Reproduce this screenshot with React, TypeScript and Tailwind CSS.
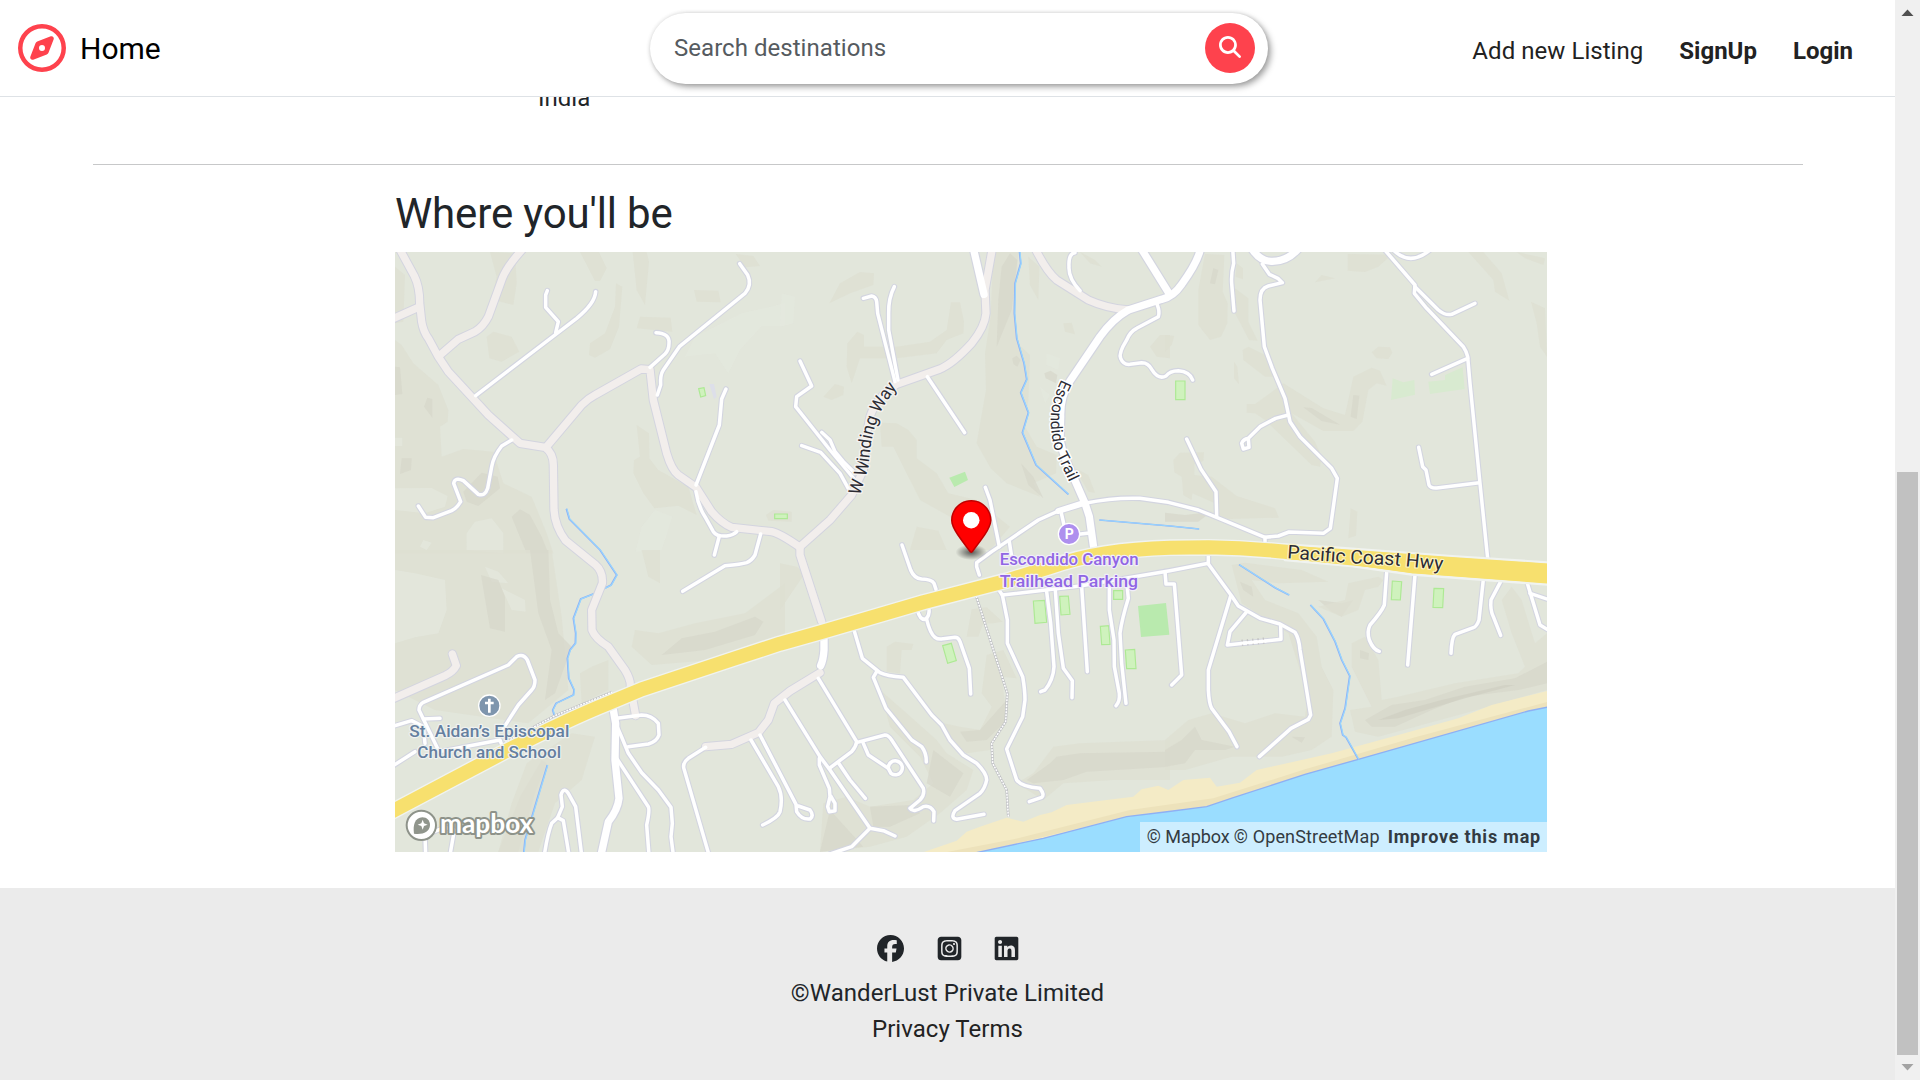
import { FaFacebook, FaLinkedin, FaMagnifyingGlass, FaRegCompass, FaSquareInstagram } from "react-icons/fa6";

type Point = [number, number];
type Shape = { at: Point; d: string };
type Road = Shape & { kind: "lane" | "street" | "avenue" | "collector" };

// The map is drawn at three units per pixel; every sheet has its own origin.
const NW: Point = [0, 0];
const N: Point = [1155, 0];
const NE: Point = [2310, 0];
const SW: Point = [0, 900];
const S: Point = [1155, 900];
const SE: Point = [2310, 900];

const terrain: (Shape & { tone: "soft" | "mid" | "deep" | "light" })[] = [
  // north-west
  { at: NW, tone: "soft", d: "M0 270L20 285L55 340L130 405L160 480L158 515L135 530L140 620L205 597L295 605L325 700L410 740L455 850L475 910L0 910Z" },
  { at: NW, tone: "mid", d: "M0 350L15 352L22 432L0 435ZM87 470L97 443L112 447L112 503ZM20 625L50 625L48 660L15 672Z" },
  { at: NW, tone: "mid", d: "M205 725L260 668L308 680L315 715L250 768L215 755ZM350 800L375 778L405 795L440 860L460 910L395 910Z" },
  { at: NW, tone: "light", d: "M0 715L110 714L158 738L150 770L90 790L0 780ZM215 850L240 815L290 805L325 850L325 910L215 900ZM0 563L22 563L22 588L0 588ZM85 870L110 878L95 900L75 890Z" },
  { at: NW, tone: "soft", d: "M285 6L360 10L365 100L355 165L290 148L305 80ZM275 260L295 245L350 260L373 305L320 335L283 325Z" },
  { at: NW, tone: "soft", d: "M555 6L612 6L635 55L615 93L600 93ZM663 100L682 110L672 230L645 298L600 323L582 315L585 280L630 250L660 170Z" },
  { at: NW, tone: "soft", d: "M713 6L755 6L762 35L750 165L725 120ZM735 200L827 203L832 245L725 235ZM897 120L970 122L977 157L905 155ZM1022 12L1075 18L1095 48L1050 52Z" },
  { at: NW, tone: "soft", d: "M725 525L762 550L763 625L790 660L880 710L905 795L850 767L778 775L745 730L715 670L717 630L735 620Z" },
  { at: NW, tone: "light", d: "M740 830L780 780L832 800L800 900L722 905ZM1000 370L1035 300L1100 228L1170 228L1170 160L1040 190L900 260L870 320L960 310Z" },
  { at: NW, tone: "soft", d: "M0 50L30 75L25 215L0 220ZM1113 795L1135 780L1190 785L1190 815L1120 812Z" },
  // north
  { at: N, tone: "soft", d: "M148 160L180 100L240 66L282 70L280 105L210 130ZM202 280L232 245L252 255L252 290L350 290L450 275L500 240L513 157L540 157L552 215L550 250L500 270L470 310L350 325L240 325L215 400L200 350ZM130 440L165 402L192 410L190 435L155 450Z" },
  { at: N, tone: "soft", d: "M640 6L715 6L703 200L712 280L750 315L745 450L735 530L770 590L830 615L828 670L760 700L780 740L680 700L632 655L590 580L618 420L615 310L632 200Z" },
  { at: N, tone: "mid", d: "M665 50L690 10L712 30L695 180L650 290L655 150ZM697 325L710 317L722 330L712 350L700 342ZM723 640L760 680L790 745L745 705ZM793 370L812 362L832 375L828 400L797 385Z" },
  { at: N, tone: "soft", d: "M300 518L350 520L385 540L410 570L410 625L470 670L505 730L590 750L690 830L630 900L560 900L510 800L420 750L370 650L340 590L305 590ZM885 655L925 675L945 728L925 725Z" },
  { at: N, tone: "soft", d: "M900 6L945 30L965 50L930 40ZM1110 290L1140 255L1170 255L1170 325L1130 320ZM745 20L778 50L775 150L750 105ZM850 220L875 218L885 253L855 245ZM410 830L475 842L500 900L390 900Z" },
  { at: N, tone: "light", d: "M5 130L45 140L40 220L0 230ZM800 310L840 325L835 360L800 345ZM780 410L810 435L795 460Z" },
  // north-east
  { at: NE, tone: "soft", d: "M120 12L178 15L173 125L188 160L187 220L168 260L135 270L100 225L100 120ZM215 40L234 55L234 88L212 80ZM210 115L250 145L250 215L278 272L252 270L210 190ZM233 300L250 290L310 320L325 380L300 380L235 330Z" },
  { at: NE, tone: "soft", d: "M245 462L270 462L315 430L355 400L475 475L540 495L550 450L565 380L620 353L645 362L665 407L635 400L610 420L592 515L565 543L475 543L380 490L450 575L470 620L465 650L440 645L300 510L270 490L245 488Z" },
  { at: NE, tone: "mid", d: "M415 472L440 474L525 524L470 513ZM565 435L583 437L575 507L557 500ZM145 55L160 60L150 103L135 100Z" },
  { at: NE, tone: "soft", d: "M620 307L640 290L675 292L682 308L670 327L635 325ZM548 12L680 14L640 50L600 66L548 62ZM910 6L955 6L1010 70L1033 152L990 125L985 90ZM1055 6L1140 25L1135 45L1080 25ZM1098 155L1140 175L1146 320L1125 290L1115 220ZM450 97L470 75L510 85Z" },
  { at: NE, tone: "soft", d: "M25 630L45 608L117 607L115 633L88 642L88 675L140 680L215 738L330 775L342 803L165 808L150 760L82 730L80 750L55 735L50 680L28 667ZM557 775L577 785L573 857L550 865ZM0 255L28 258L20 285L0 305ZM207 335L217 350L222 403L207 385Z" },
  { at: NE, tone: "mid", d: "M0 788L60 795L140 785L100 815L0 815Z" },
  // south-west
  { at: SW, tone: "soft", d: "M0 0L470 0L500 200L520 420L400 520L120 480L0 420Z" },
  { at: SW, tone: "light", d: "M0 60L60 70L150 90L155 180L130 250L60 262L0 280ZM320 115L390 150L392 185L350 180ZM270 50L310 65L340 100L290 95Z" },
  { at: SW, tone: "mid", d: "M405 0L460 0L465 150L490 250L530 290L480 430L450 450L470 300L430 190ZM258 75L310 90L330 140L330 245L285 235ZM375 740L440 630L455 640L420 730L370 905L310 905Z" },
  { at: SW, tone: "soft", d: "M395 640L530 550L600 560L560 690L480 760L430 905L310 905L350 760ZM555 370L590 350L640 330L640 420L560 460ZM720 240L790 250L900 220L1050 190L1170 100L1170 250L950 330L770 345L710 290ZM740 0L795 0L795 100L760 80Z" },
  { at: SW, tone: "mid", d: "M800 315L860 265L960 245L1080 200L1105 215L1080 255L930 300Z" },
  // south
  { at: S, tone: "soft", d: "M0 40L50 50L75 70L0 180ZM575 178L620 172L668 215L640 220L610 220L595 260L560 260ZM320 290L345 275L400 282L395 300L365 300L360 370L320 365ZM620 315L670 300L710 385L665 380L680 500L630 600L560 610L500 570L490 520L540 530L600 540L635 470L605 430Z" },
  { at: S, tone: "soft", d: "M300 420L380 490L470 570L500 610L580 660L560 720L480 790L380 860L270 890L120 905L130 760L200 740L270 770L400 750L460 700L420 620L330 530ZM710 700L760 670L820 590L900 580L1170 570L1170 690L1000 690L850 700L790 750Z" },
  { at: S, tone: "mid", d: "M740 690L810 640L830 620L900 610L1170 605L1170 650L920 665L850 690L760 700ZM460 600L550 670L510 740L440 700ZM270 770L400 765L420 790L330 830L280 830ZM540 545L600 540L680 450L680 510L620 570L560 575ZM150 780L250 890L120 905Z" },
  // south-east
  { at: SE, tone: "soft", d: "M200 45L240 38L410 60L490 95L340 100L260 90L300 150L400 190L455 260L470 350L505 420L500 560L440 600L350 620L200 620L60 660L0 660L0 570L70 510L140 490L240 520L330 490L420 500L430 440L370 250L230 160Z" },
  { at: SE, tone: "mid", d: "M0 600L50 570L90 530L110 570L210 590L180 600L90 600L60 640L0 650ZM380 560L420 562L410 578ZM225 95L260 110L265 140L235 120ZM460 150L530 160L565 150L530 200L500 185Z" },
  { at: SE, tone: "soft", d: "M550 100L640 80L655 90L640 110L600 120L580 180L530 200L460 170L540 150ZM560 280L600 260L640 330L650 450L700 440L870 400L1060 370L1080 350L1040 250L1010 150L1040 110L1070 150L1110 280L1146 250L1146 420L900 490L640 560L570 545L555 480L620 470L560 350Z" },
  { at: SE, tone: "mid", d: "M600 510L680 465L780 450L900 410L1050 385L1146 335L1146 400L1060 420L900 440L800 480L690 530L620 530ZM585 300L612 310L610 330L585 325Z" },
  { at: SE, tone: "deep", d: "M640 510L720 480L830 450L1020 405L1050 405L900 445L700 505Z" },
];

const roads: Road[] = [
  // main local roads
  { at: NW, kind: "collector", d: "M10 -10L58 78Q74 110 74 160L80 215Q85 245 100 265L130 320L160 365L280 495L375 580L450 592Q475 610 475 645L477 780Q480 830 512 872L600 943Q625 965 622 1000L590 1080L591 1140Q600 1165 640 1190L690 1260Q708 1290 706 1310L722 1397" },
  { at: NW, kind: "collector", d: "M-15 210L70 172" },
  { at: NW, kind: "collector", d: "M385 -5Q335 50 322 85L280 200Q265 230 240 245L190 268L132 318" },
  { at: NW, kind: "collector", d: "M453 592L560 465Q580 445 600 435L738 357L765 359L775 450L815 610Q830 660 850 675L903 712L950 785Q980 820 1010 832L1130 845Q1155 850 1215 892" },
  { at: N, kind: "collector", d: "M60 890L150 810L215 735L250 660L258 560L270 500Q290 440 350 403L480 357Q520 340 575 280Q615 230 618 190L615 120L637 -5" },
  { at: N, kind: "collector", d: "M60 890L60 915L125 1115" },
  { at: N, kind: "collector", d: "M765 -5Q800 65 830 90L925 150Q980 175 1045 180" },
  { at: SW, kind: "collector", d: "M172 312L184 347Q175 365 150 377L-15 450" },
  { at: SW, kind: "collector", d: "M932 590L1010 583L1090 548L1120 510L1138 460L1185 423L1275 368" },

  { at: N, kind: "lane", d: "M598 975L590 950L590 938L635 905L690 868L775 810L835 783L915 760Q1000 742 1080 745L1165 757L1255 780L1310 802L1455 862L1455 882" },
  { at: N, kind: "street", d: "M835 783L915 758" },
  { at: N, kind: "avenue", d: "M580 -5L612 133" },
  { at: N, kind: "avenue", d: "M1080 -10L1170 135" },
  { at: N, kind: "avenue", d: "M1262 -10Q1258 30 1205 103Q1180 140 1145 148L1045 180Q1000 205 960 260L870 393Q840 440 842 500L840 570Q850 620 880 680L915 760L928 800L942 900" },
  { at: NE, kind: "avenue", d: "M260 -5Q285 35 320 34Q370 35 405 -10" },
  { at: SW, kind: "avenue", d: "M655 480L662 520L660 630L672 745Q668 780 640 815L618 915" },
  { at: S, kind: "avenue", d: "M132 255L132 300Q130 330 122 347" },

  // north-west lanes
  { at: NW, kind: "lane", d: "M242 437L545 205Q600 160 602 125" },
  { at: NW, kind: "lane", d: "M457 122L452 135L452 172L490 215L482 248" },
  { at: NW, kind: "lane", d: "M1034 41L1058 75Q1072 105 1050 130L853 290L805 360Q795 375 797 405L787 435" },
  { at: NW, kind: "lane", d: "M783 248Q825 250 822 280Q822 300 810 312L765 352" },
  { at: NW, kind: "lane", d: "M993 417L980 447L973 525L903 705" },
  { at: NW, kind: "lane", d: "M903 725Q910 770 930 800L955 845Q965 860 995 858Q1015 855 1025 845" },
  { at: NW, kind: "lane", d: "M973 858L958 915" },
  { at: NW, kind: "lane", d: "M1097 852L1080 915Q1070 932 1055 938Q1040 943 990 947L863 1024" },
  { at: NW, kind: "lane", d: "M350 570L320 588Q295 620 290 650L278 715Q270 740 250 733L205 692Q180 680 176 700L197 755Q185 775 170 782L115 803L92 802L70 768" },

  // north lanes
  { at: N, kind: "lane", d: "M250 145L275 138Q288 140 290 155L293 190L345 395" },
  { at: N, kind: "lane", d: "M343 110Q325 145 326 190L326 240L354 390" },
  { at: N, kind: "lane", d: "M60 333L95 408L50 440L47 470L150 600L225 690" },
  { at: N, kind: "lane", d: "M125 547L150 570L165 605L190 635L225 670" },
  { at: N, kind: "lane", d: "M65 587L122 607L180 670L210 725" },
  { at: N, kind: "lane", d: "M442 380L554 548" },
  { at: N, kind: "lane", d: "M616 712L630 750L658 890" },
  { at: N, kind: "lane", d: "M688 875L695 920" },
  { at: N, kind: "lane", d: "M843 785L852 825" },
  { at: N, kind: "lane", d: "M895 853L935 848" },
  { at: N, kind: "lane", d: "M366 885L392 960Q402 985 425 987Q455 988 462 1000L468 1018" },
  { at: N, kind: "lane", d: "M885 8Q865 10 867 50Q865 85 900 122" },
  { at: N, kind: "lane", d: "M1132 165Q1140 185 1135 200L1070 235Q1050 245 1040 270Q1015 310 1022 325Q1030 345 1050 343L1085 338Q1105 338 1115 358Q1135 390 1158 378Q1170 362 1195 362Q1230 365 1238 390" },

  // north-east lanes
  { at: NE, kind: "lane", d: "M203 -5L206 40Q198 70 200 100L207 183" },
  { at: NE, kind: "lane", d: "M292 42L313 73L340 86L352 98L310 108Q285 115 285 150L298 290L322 355L360 445L375 515L405 560L500 655L517 685L496 835L475 850L372 846L340 858L300 862" },
  { at: NE, kind: "lane", d: "M370 495L332 505L285 530L250 565L252 592L235 597L230 580Q235 568 250 565" },
  { at: NE, kind: "lane", d: "M65 567L108 658L153 725L155 798" },
  { at: NE, kind: "lane", d: "M655 -5L750 105L748 130L785 175L895 290Q905 305 908 320L915 400L945 700L968 925" },
  { at: NE, kind: "lane", d: "M750 110L820 180Q840 197 860 193L930 160" },
  { at: NE, kind: "lane", d: "M908 325L800 373" },
  { at: NE, kind: "lane", d: "M761 592L773 650L783 660L792 705Q797 715 815 714L943 698" },
  { at: NE, kind: "lane", d: "M685 0Q735 50 795 0" },

  // south-west lanes
  { at: SW, kind: "lane", d: "M135 505L85 507M-10 530L50 512L85 530L90 580" },
  { at: SW, kind: "lane", d: "M130 600L72 480Q72 465 85 457L340 345L365 320Q385 310 397 330L420 390Q420 410 410 420L370 465L325 535" },
  { at: SW, kind: "lane", d: "M-10 650L60 605M130 605L315 570L322 590" },
  { at: SW, kind: "lane", d: "M665 505L740 495Q770 495 790 520L792 555Q785 575 760 582L700 590" },
  { at: SW, kind: "lane", d: "M662 520Q680 560 700 610L740 668L790 720L828 772L832 820L828 860L835 915" },
  { at: SW, kind: "lane", d: "M665 625L760 770Q765 780 755 825L762 915" },
  { at: SW, kind: "lane", d: "M448 915Q458 850 470 820L488 803L505 812L522 915" },
  { at: SW, kind: "lane", d: "M488 803L502 770L498 735Q505 710 520 730L542 770L560 915" },
  { at: SW, kind: "lane", d: "M90 855L92 915M165 915L178 840L150 832L110 848" },
  { at: SW, kind: "lane", d: "M932 592L880 625Q860 640 868 660L942 915" },
  { at: SW, kind: "lane", d: "M1068 570L1150 710Q1165 740 1155 785Q1150 802 1103 825" },
  { at: SW, kind: "lane", d: "M1095 555L1203 763L1205 785Q1220 810 1245 807Q1258 797 1245 780L1210 768" },

  // south lanes
  { at: S, kind: "lane", d: "M15 450L120 620L150 660L270 835L310 842L345 858" },
  { at: S, kind: "lane", d: "M270 835L215 890L150 912" },
  { at: S, kind: "lane", d: "M115 385L230 575Q228 590 215 605L148 655" },
  { at: S, kind: "lane", d: "M232 577L315 555Q325 555 335 570L430 715Q435 735 420 750L390 775Q400 790 430 770Q450 765 462 785L461 813" },
  { at: S, kind: "lane", d: "M250 580L265 615L325 655" },
  { at: S, kind: "lane", d: "M325 655A21 21 0 1 1 333 670Z" },
  { at: S, kind: "lane", d: "M175 638L210 690L256 745" },
  { at: S, kind: "lane", d: "M118 625L118 645L148 715L150 740L143 770L148 785L165 782L165 760L152 738" },
  { at: S, kind: "lane", d: "M222 240L247 325L300 368Q320 378 370 382L455 495L485 525L510 570L550 615L590 640Q620 670 620 690Q615 715 600 730L525 782Q510 805 530 808L612 793" },
  { at: S, kind: "lane", d: "M290 365L280 382L318 475L395 570L425 590Q440 610 439 636" },
  { at: S, kind: "lane", d: "M412 180Q420 210 435 208Q450 200 447 172" },
  { at: S, kind: "lane", d: "M440 208Q450 250 465 262Q475 270 490 266L525 262Q535 262 540 275L568 355L572 432" },
  { at: S, kind: "lane", d: "M650 110L667 135L682 210L682 280L728 380Q735 420 735 450L728 500L680 597L710 690Q725 710 780 715Q795 735 785 742L748 755" },
  { at: S, kind: "lane", d: "M667 135L900 108L1170 62L1285 40" },
  { at: S, kind: "lane", d: "M800 125L812 220L822 350Q820 390 795 420L782 425" },
  { at: S, kind: "lane", d: "M826 120L835 250L850 355L877 392L876 443" },
  { at: S, kind: "lane", d: "M905 110L922 365" },
  { at: S, kind: "lane", d: "M988 105L988 180L1002 270L1003 350L1018 430Q1020 455 1008 467" },
  { at: S, kind: "lane", d: "M1040 95L1045 145Q1025 210 1020 250L1025 340L1038 460" },

  // south-east lanes
  { at: SE, kind: "lane", d: "M0 65L3 102L28 102L50 375L20 405" },
  { at: SE, kind: "lane", d: "M130 10L130 42L200 138L220 168L285 205L345 222L390 247Q402 265 405 300L437 495L430 508L378 535L283 620" },
  { at: SE, kind: "lane", d: "M197 138L130 360L130 420Q132 460 140 475L192 545L216 590" },
  { at: SE, kind: "lane", d: "M243 188L195 245L187 285L348 268L347 228" },
  { at: SE, kind: "lane", d: "M665 68L658 165Q650 185 615 225Q605 245 613 270Q625 300 643 304" },
  { at: SE, kind: "lane", d: "M750 75L728 345" },
  { at: SE, kind: "lane", d: "M955 88L942 210Q935 230 925 233L870 253Q860 262 858 310" },
  { at: SE, kind: "lane", d: "M1007 95L978 150Q975 180 985 200L1007 256" },
  { at: SE, kind: "lane", d: "M1087 100L1125 225L1155 243" },
  { at: SE, kind: "lane", d: "M1095 130L1155 150" },
];

const streams: Shape[] = [
  { at: N, d: "M718 0L722 40L705 100L703 190L710 265L732 340L740 388L722 428L745 488L727 548L768 645L865 733" },
  { at: NW, d: "M514 776L523 807L615 900L665 975L648 1005L600 1030L557 1047L535 1105L542 1150L541 1180L525 1200L517 1225L521 1285L537 1320L535 1335L483 1360L473 1380L478 1397" },
  { at: SW, d: "M457 645L430 735L390 870L386 910" },
  { at: N, d: "M958 810L1170 828L1257 837" },
  { at: SE, d: "M222 44L330 113L372 135" },
  { at: SE, d: "M436 165L475 207L510 275L530 330L554 378L540 475L525 520L533 555L543 562L580 628" },
];

const courts: Shape[] = [
  { at: NW, d: "M911 416L927 413L932 437L917 441Z" },
  { at: NW, d: "M1139 792H1177V806H1139Z" },
  { at: NE, d: "M32 393H60V449H32Z" },
  { at: S, d: "M760 153L794 151L800 217L765 220Z" },
  { at: S, d: "M839 139L865 138L870 193L843 195Z" },
  { at: S, d: "M1001 122H1028V148H1001Z" },
  { at: S, d: "M961 229L986 227L990 283L965 284Z" },
  { at: S, d: "M1036 300L1064 298L1068 356L1040 356Z" },
  { at: S, d: "M488 287L514 280L529 332L503 340Z" },
  { at: SE, d: "M682 93L710 95L706 150L679 149Z" },
  { at: SE, d: "M807 115L836 116L833 173L804 172Z" },
];

const tones = {
  soft: "fill-[#dddfd1]/75",
  mid: "fill-[#d6d6c9]/65",
  deep: "fill-[#cfcec2]/70",
  light: "fill-[#e4e8de]/70",
};
const casing = {
  lane: "stroke-[#d3d5e0] [stroke-width:17]",
  street: "stroke-[#d3d5e0] [stroke-width:24]",
  avenue: "stroke-[#d3d5e0] [stroke-width:29]",
  collector: "stroke-[#d3d4df] [stroke-width:28]",
};
const surface = {
  lane: "stroke-white [stroke-width:10.5]",
  street: "stroke-white [stroke-width:18]",
  avenue: "stroke-white [stroke-width:22]",
  collector: "stroke-[#f2eeec] [stroke-width:22]",
};

const move = ([x, y]: Point) => `translate(${x} ${y})`;

const highway =
  "M-20 790L330 605Q520 508 640 460L740 418L1020 325L1155 281L1280 246L1585 157L1835 92L1960 53Q2050 22 2130 10Q2220 -4 2325 -7L2440 -8Q2560 -6 2690 7L3000 38";

function MapDrawing() {
  return (
    <svg viewBox="0 6 3456 1800" className="block h-full w-full" preserveAspectRatio="none">
      <rect x="0" y="0" width="3456" height="1810" className="fill-[#e2e6db]" />
      {terrain.map((t, i) => (
        <path key={i} d={t.d} transform={move(t.at)} className={tones[t.tone]} />
      ))}

      <g transform={move(NE)} className="fill-[#d8ead0]">
        <path d="M683 385L715 397L748 390L750 434L678 450Z" />
        <path d="M790 395L840 390L840 375L893 352L899 417L795 432Z" />
      </g>
      <path transform={move(N)} d="M508 683L555 665L564 690L523 711Z" className="fill-[#b9eaae]" />
      <path transform={move(S)} d="M1074 168L1158 159L1168 254L1083 261Z" className="fill-[#b9eaae]" />
      <path transform={move(NW)} d="M943 402L957 402L965 440L957 448Z" className="fill-[#dddfe9]" />
      {courts.map((c, i) => (
        <path key={i} d={c.d} transform={move(c.at)} className="fill-[#cff2bd] stroke-[#ade994] [stroke-width:3.5]" />
      ))}

      {/* shoreline */}
      <g transform={move(S)}>
        <path
          className="fill-[#f4ebc6]"
          d="M420 910L530 872L560 845L600 830L680 803L730 815L780 795L815 787L860 765L980 750L1060 740L1085 718L1135 707L1165 720L1210 690L1290 683L1310 710L1380 698L1430 660L1655 610L1855 555L2035 505L2135 465L2305 422L2305 910Z"
        />
        <path
          className="fill-[#ede2bb]"
          d="M480 910L700 868L1050 780L1300 745L1575 658L1900 563L2305 455L2305 480L1575 675L1280 772L1040 800L585 910Z"
        />
        <path className="fill-[#9addff] stroke-[#8eb0f4] [stroke-width:4]" d="M570 912L790 865L1040 800L1155 786L1280 770L1360 743L1575 673L1735 628L2245 483L2320 468L2320 920Z" />
      </g>

      {streams.map((s, i) => (
        <g key={i} transform={move(s.at)} className="fill-none">
          <path d={s.d} className="stroke-[#8fb0f6] [stroke-width:5]" />
          <path d={s.d} transform="translate(1.5 0)" className="stroke-[#97d6ff] [stroke-width:3.5]" />
        </g>
      ))}

      <g transform={move(S)} className="fill-none">
        <path d="M586 130L682 430L677 515L635 580L638 640L680 720L685 800" className="stroke-[#bfc0c4] [stroke-width:8]" />
        <path d="M586 130L682 430L677 515L635 580L638 640L680 720L685 800" className="stroke-white [stroke-dasharray:6_3] [stroke-width:4.5]" />
      </g>
      <g transform={move(SW)} className="fill-none">
        <path d="M330 577L480 497L652 426" className="stroke-[#bfc0c4] [stroke-width:8]" />
        <path d="M330 577L480 497L652 426" className="stroke-white [stroke-dasharray:6_3] [stroke-width:4.5]" />
      </g>

      <g className="fill-none [stroke-linecap:round] [stroke-linejoin:round]">
        {roads.map((r, i) => (
          <path key={i} d={r.d} transform={move(r.at)} className={casing[r.kind]} />
        ))}
        {roads.map((r, i) => (
          <path key={i} d={r.d} transform={move(r.at)} className={surface[r.kind]} />
        ))}
      </g>
      <path transform={move(SE)} d="M230 278.500L302 271.500" className="fill-none stroke-[#c4c4c4] [stroke-dasharray:4_12] [stroke-width:19]" />
      <path transform={move(SE)} d="M228 280L304 273" className="fill-none stroke-white [stroke-width:9]" />

      <g transform={move(SW)} className="fill-none [stroke-linejoin:round]">
        <path d={highway} className="stroke-[#f0f3f0] [stroke-width:50]" />
        <path d="M2660 -16L2810 -8L3160 18L3480 39L3480 105L3050 73L2870 48L2670 30Z" className="fill-[#f7e06e] stroke-[#f0f3f0] [stroke-width:8]" />
        <path d={highway} className="stroke-[#f7e06e] [stroke-width:42]" />
        <path d="M2660 -12L2810 -5L3160 20L3480 42L3480 102L3050 70L2870 44L2670 27Z" className="fill-[#f7e06e]" />
      </g>

      {/* street names */}
      <defs>
        <path id="winding" d="M1395 737L1419 655L1427 590Q1433 540 1455 490Q1475 450 1514 403" />
        <path id="escondido" d="M2000 388Q1965 460 1967 515Q1970 590 1992 630L2034 720" />
        <path id="pacific" d="M2676 925L2810 935L2870 940L3000 946L3170 963" />
      </defs>
      <g className="fill-[#2b2b33] font-['Roboto'] text-[53px] [paint-order:stroke] [stroke-linejoin:round]">
        <text className="stroke-[#f4f2f0] [stroke-width:9]" textLength="349" lengthAdjust="spacingAndGlyphs">
          <textPath href="#winding">W Winding Way</textPath>
        </text>
        <text className="stroke-white text-[48px] [stroke-width:9]" textLength="325" lengthAdjust="spacingAndGlyphs">
          <textPath href="#escondido">Escondido Trail</textPath>
        </text>
        <text className="stroke-[#fbf3c4] text-[57px] [stroke-width:7]" textLength="468" lengthAdjust="spacingAndGlyphs">
          <textPath href="#pacific">Pacific Coast Hwy</textPath>
        </text>
      </g>

      {/* places */}
      <g transform={move(S)} className="fill-[#9066e3] stroke-[#f1eefa] font-['Roboto'] text-[52px] font-medium [paint-order:stroke] [stroke-linejoin:round] [stroke-width:7]">
        <text x="659" y="45" textLength="417" lengthAdjust="spacingAndGlyphs">Escondido Canyon</text>
        <text x="659" y="110" textLength="415" lengthAdjust="spacingAndGlyphs">Trailhead Parking</text>
      </g>
      <g transform={move(N)}>
        <circle cx="867" cy="852" r="32" className="fill-[#ae8fee] stroke-white [stroke-width:4]" />
        <text x="868" y="867" textAnchor="middle" className="fill-white font-['Roboto'] text-[42px] font-bold">P</text>
      </g>
      <g transform={move(SW)} className="fill-[#657f9f] stroke-[#eff2f1] font-['Roboto'] text-[52px] font-medium [paint-order:stroke] [stroke-linejoin:round] [stroke-width:7]">
        <text x="43" y="560" textLength="480" lengthAdjust="spacingAndGlyphs">St. Aidan’s Episcopal</text>
        <text x="67" y="625" textLength="431" lengthAdjust="spacingAndGlyphs">Church and School</text>
      </g>
      <g transform={move(SW)}>
        <circle cx="283" cy="467" r="32" className="fill-[#7e95ad] stroke-white [stroke-width:4]" />
        <path d="M283 446V488M270 459H296" className="fill-none stroke-white [stroke-width:8]" />
      </g>

      {/* marker */}
      <g transform="translate(1668 750) scale(4.5)">
        <defs>
          <radialGradient id="markerShade">
            <stop offset="10%" stopOpacity="0.55" />
            <stop offset="100%" stopOpacity="0" />
          </radialGradient>
        </defs>
        <ellipse cx="13.5" cy="34.8" rx="10.5" ry="5.25" fill="url(#markerShade)" />
        <path
          className="fill-[#ff0000]"
          d="M27 13.5C27 19.07 20.25 27 14.75 34.5C14.02 35.5 12.98 35.5 12.25 34.5C6.75 27 0 19.22 0 13.5C0 6.04 6.04 0 13.5 0C20.96 0 27 6.04 27 13.5Z"
        />
        <path
          className="fill-black/25"
          d="M13.5 0C6.04 0 0 6.04 0 13.5C0 19.22 6.75 27 12.25 34.5C13 35.52 14.02 35.5 14.75 34.5C20.25 27 27 19.07 27 13.5C27 6.04 20.96 0 13.5 0ZM13.5 1C20.42 1 26 6.58 26 13.5C26 15.9 24.5 19.18 22.22 22.74C19.95 26.3 16.71 30.14 13.94 33.91C13.74 34.18 13.61 34.32 13.5 34.44C13.39 34.32 13.26 34.18 13.06 33.91C10.28 30.13 7.41 26.31 5.02 22.77C2.62 19.23 1 15.95 1 13.5C1 6.58 6.58 1 13.5 1Z"
        />
        <circle cx="13.5" cy="13.5" r="5.5" className="fill-white" />
      </g>

      {/* provider logo */}
      <g transform={move(SW)}>
        <circle cx="79" cy="826" r="44" className="fill-white stroke-[#8e938a] [stroke-width:6]" />
        <path
          d="M57 851C53 825 60 803 82 802C96 802 105 812 105 825C104 847 83 854 57 851Z"
          className="fill-[#90958c]"
        />
        <path d="M83 809L87 820L98 824L87 828L83 839L79 828L68 824L79 820Z" className="fill-white" />
        <text
          x="135"
          y="850"
          textLength="280"
          lengthAdjust="spacingAndGlyphs"
          className="fill-white stroke-[#8e938a] font-['Lato'] text-[80px] font-bold [paint-order:stroke] [stroke-linejoin:round] [stroke-width:12]"
        >
          mapbox
        </text>
      </g>
    </svg>
  );
}

function Header() {
  return (
    <header className="z-10 flex h-[97px] shrink-0 items-center border-b border-[#dee2e6] bg-white">
      <div className="flex w-[650px] items-center pb-px">
        <FaRegCompass className="ml-[18px] size-12 text-[#fe424d]" />
        <span className="ml-3.5 pt-0.5 text-[30px] leading-[45px] text-black">Home</span>
      </div>
      <div className="flex h-[71px] w-[618px] items-center justify-between rounded-full bg-white pr-[13px] pl-6 shadow-[3px_3px_6px_rgba(0,0,0,0.35),0_0_4px_rgba(0,0,0,0.13)]">
        <span className="text-2xl tracking-[0.04px] text-[#565b60]">Search destinations</span>
        <span className="flex size-[50px] items-center justify-center rounded-full bg-[#fe424d] pb-0.5">
          <FaMagnifyingGlass className="size-[22px] text-white" />
        </span>
      </div>
      <nav className="ml-auto flex gap-9 pt-[5px] pr-[42px] text-2xl text-[#222222]">
        <span className="tracking-[0.05px]">Add new Listing</span>
        <span className="font-bold">SignUp</span>
        <span className="font-bold">Login</span>
      </nav>
    </header>
  );
}

function Footer() {
  return (
    <footer className="flex h-48 shrink-0 flex-col items-center bg-[#ebebeb] pt-[46px] text-2xl leading-9 text-[#212529]">
      <div className="flex h-[29px] items-center gap-[31px] pl-0.5">
        <FaFacebook className="size-[27px]" />
        <FaSquareInstagram className="ml-px size-[27px]" />
        <FaLinkedin className="-ml-px size-[27px]" />
      </div>
      <p className="mt-3 tracking-[0.04px]">©WanderLust Private Limited</p>
      <p className="tracking-[0.04px] text-[#222222]">Privacy Terms</p>
    </footer>
  );
}

function Scrollbar() {
  return (
    <aside className="flex w-[25px] flex-col items-center bg-[#f0f0f0]">
      <svg viewBox="0 0 25 25" className="size-[25px]">
        <path d="M6.5 16L12.5 9.5L18.5 16Z" className="fill-[#505050]" />
      </svg>
      <div className="mt-[447px] h-[583px] w-[21px] bg-[#c1c1c1]" />
      <svg viewBox="0 0 25 25" className="size-[25px]">
        <path d="M6.5 9L12.5 15.5L18.5 9Z" className="fill-[#a3a3a3]" />
      </svg>
    </aside>
  );
}

export default function App() {
  return (
    <div className="flex h-[1080px] w-[1920px] overflow-hidden bg-white font-['Roboto',sans-serif] text-[#212529]">
      <div className="flex w-[1895px] flex-col">
        <Header />
        <main className="flex h-[791px] shrink-0 flex-col">
          <p className="-mt-[17px] ml-[538px] h-9 text-2xl leading-9">India</p>
          <div className="mt-12 mr-[92px] ml-[93px] h-px shrink-0 bg-[#c7c8c9]" />
          <h3 className="mt-6 ml-[395px] text-[42px] leading-[50px] tracking-[-0.15px]">Where you'll be</h3>
          <div className="relative mt-[13px] ml-[395px] h-[600px] w-[1152px] shrink-0 overflow-hidden">
            <MapDrawing />
            <div className="absolute right-0 bottom-0 flex h-[30px] w-[407px] items-center justify-end gap-1 bg-white/50 pr-1.5 text-lg text-[#333b42]">
              <span className="tracking-[-0.05px]">© Mapbox</span>
              <span className="tracking-[0.15px]">© OpenStreetMap</span>
              <span className="ml-1 font-bold tracking-[0.8px]">Improve this map</span>
            </div>
          </div>
        </main>
        <Footer />
      </div>
      <Scrollbar />
    </div>
  );
}
